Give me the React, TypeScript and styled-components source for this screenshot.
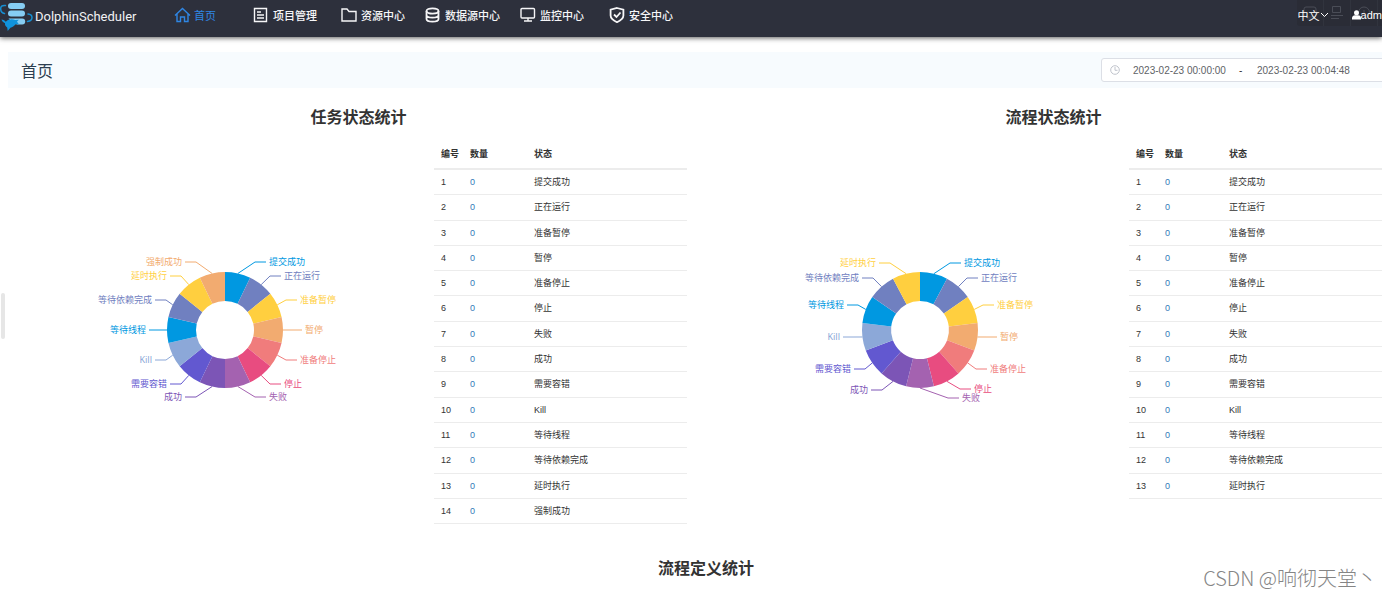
import React from "react";
import styled, { createGlobalStyle } from "styled-components";

const sans = `"Liberation Sans", "Noto Sans CJK SC", sans-serif`;

const GlobalStyle = createGlobalStyle`
  * { box-sizing: border-box; }
  body {
    margin: 0;
    background: #fff;
    color: #333;
    font-family: ${sans};
    overflow-x: hidden;
  }
  a { text-decoration: none; color: inherit; }
`;

const Page = styled.div`
  position: relative;
  overflow: hidden;
`;

const Header = styled.header`
  position: relative;
  display: flex;
  align-items: flex-start;
  height: 37px;
  background: #2d303c;
  color: #fff;
  box-shadow: 0 1px 5px rgba(0, 0, 0, 0.65);
`;

const Brand = styled.a`
  display: flex;
  align-items: center;
  gap: 2px;
  width: 174px;
  height: 32px;
  font-family: Roboto, sans-serif;
  font-size: 13px;
  color: #f2f2f4;
`;

const Nav = styled.nav`
  display: grid;
  grid-template-columns: 79px 88px 84px 95px 89px auto;
  height: 30px;
`;

const NavLink = styled.a<{ $active?: boolean }>`
  display: flex;
  align-items: center;
  gap: 3px;
  font-size: 11px;
  font-weight: ${(p) => (p.$active ? 400 : 500)};
  white-space: nowrap;
  color: ${(p) => (p.$active ? "#2f86e4" : "#f6f6f8")};

  svg {
    flex: none;
  }
`;

const Account = styled.div`
  position: relative;
  z-index: 1;
  display: flex;
  align-items: center;
  gap: 23px;
  height: 30px;
  margin-left: auto;
  font-size: 11px;
`;

const AccountLink = styled.a`
  display: flex;
  align-items: center;
  white-space: nowrap;
`;

const Ghost = styled.div`
  position: absolute;
  top: 0;
  right: 0;
  display: flex;
  width: 85px;
  height: 26px;
  overflow: hidden;
  background: #2a2c36;
  border-bottom-left-radius: 3px;
`;

const GhostCell = styled.span`
  display: flex;
  flex: none;
  align-items: center;
  justify-content: center;
  width: 27px;
  border-right: 1px solid #31343e;
`;

const Content = styled.main`
  width: calc(100% + 22px);
  padding: 15px 0 0 8px;
`;

const TitleBar = styled.div`
  display: flex;
  align-items: center;
  justify-content: space-between;
  height: 36px;
  padding: 0 13px;
  background: #f7fbfe;
`;

const PageTitle = styled.h1`
  margin: 0;
  font-size: 16px;
  font-weight: 400;
  color: #2c3e50;
`;

const RangePicker = styled.div`
  display: flex;
  align-items: center;
  width: 290px;
  height: 24px;
  padding: 0 8px;
  border: 1px solid #dcdfe6;
  border-radius: 3px;
  background: #fff;
  font-size: 10px;
`;

const DateInput = styled.input`
  width: 98px;
  height: 20px;
  padding: 0;
  border: 0;
  outline: 0;
  background: none;
  font-family: ${sans};
  font-size: 10px;
  color: #606266;
`;

const Dash = styled.span`
  width: 26px;
  padding-left: 8px;
`;

const ClockBox = styled.span`
  display: flex;
  width: 23px;
`;

const Stats = styled.div`
  display: grid;
  grid-template-columns: 1fr 1fr;
  padding: 0 3px;
`;

const SectionTitle = styled.h2`
  margin: 0;
  padding: 18px 0 0;
  font-size: 16px;
  line-height: 24px;
  font-weight: 700;
  text-align: center;
  color: #333;
`;

const PanelBody = styled.div`
  display: grid;
  grid-template-columns: 1fr 253px;
  align-items: start;
  height: 409px;
  padding: 9px 19px 0 4px;
`;

const ChartBox = styled.div`
  display: flex;
  justify-content: center;
  padding-top: 91px;
`;

const Table = styled.table`
  width: 100%;
  border-collapse: separate;
  border-spacing: 0;
  table-layout: fixed;
  font-size: 9px;
  line-height: 1.7;
  text-align: left;
`;

const Th = styled.th<{ $w?: number }>`
  width: ${(p) => (p.$w ? `${p.$w}px` : "auto")};
  height: 31px;
  padding: 2px 0 0 7px;
  border-bottom: 2px solid #ececec;
  font-weight: 700;
`;

const Td = styled.td`
  padding: 5px 0 4px 7px;
  border-bottom: 1px solid #ececec;

  a {
    color: #337ab7;
  }
`;

const Handle = styled.span`
  position: absolute;
  top: 293px;
  left: 1px;
  width: 4px;
  height: 46px;
  border-radius: 2px;
  background: #e6e6e6;
`;

const Watermark = styled.span`
  position: absolute;
  right: 5px;
  bottom: 4px;
  font-family: "Noto Sans CJK SC", sans-serif;
  font-size: 20px;
  line-height: 30px;
  font-weight: 300;
  white-space: nowrap;
  color: #858585;
`;

const Bottom = styled.section`
  padding: 0 3px;
  height: 58px;
`;

const Logo = () => (
  <svg width="33" height="31" viewBox="0 0 33 31" aria-hidden="true">
    <g fill="#86cdf3">
      <rect x="8" y="2" width="17" height="6" rx="3" />
      <rect x="8" y="9.500" width="17" height="6" rx="3" />
      <path d="M17 17.500h5.200a3 3 0 0 1 0 6h-5.700z" />
      <path d="M8.500 17.500h8.500v1.500H10z" />
    </g>
    <g fill="none" stroke="#168fd3" strokeWidth="1.500" strokeLinecap="round">
      <path d="M5.500 4.500c-3.500-.5-5 1-4.800 3.500.1 2.500 1.500 4 3.800 4.500" />
      <path d="M28 13c2.800.3 4 1.600 4 3.500 0 2.200-1.500 3.600-4.500 4" />
    </g>
    <path
      d="M1.500 18.500c2 .2 3.500 1 4.300 2.200 2.500-2.400 6.200-2.900 9.400-1.700l3.600-.2-1.900 2c1.100.9 1.700 2 1.900 3-1-.5-2.300-.6-3.400-.3-1.200 1.600-3 2.700-5 3.200l-2.700 3.200-.5-3.500c-1.700-1-2.500-2.600-2.200-4.200C3.200 21.400 2 20.200 1.500 18.500z"
      fill="#1093dc"
    />
  </svg>
);

const iconPaths: Record<string, React.ReactNode> = {
  home: (
    <path d="M1 8.500 8.500 1.500 16 8.500M3 7v7.500h3.500V10h4v4.500H14V7" />
  ),
  project: (
    <path d="M1.500 1.500h12v13h-12zM4 5h4M4 8h7M4 11h7" />
  ),
  folder: <path d="M1 2h5l2 2.500h7v9.500H1z" />,
  data: (
    <g strokeWidth="1.800">
      <ellipse cx="7.500" cy="4" rx="6" ry="2.600" />
      <path d="M1.500 4v8c0 1.600 2.700 2.700 6 2.700s6-1.100 6-2.700V4M1.500 8c0 1.600 2.700 2.700 6 2.700s6-1.100 6-2.700" />
    </g>
  ),
  monitor: (
    <path d="M2 1.500h11.500a1 1 0 0 1 1 1V10a1 1 0 0 1-1 1H2a1 1 0 0 1-1-1V2.500a1 1 0 0 1 1-1zM8 11v3M4 14h8" />
  ),
  shield: (
    <path
      strokeWidth="1.800"
      d="M8 1 14.400 2.600v6c0 3.200-3 5-6.400 6.600-3.400-1.600-6.400-3.400-6.400-6.600v-6zM5 7.500l2.500 2.500L11.500 5.500"
    />
  ),
};

const Icon = ({ name }: { name: string }) => (
  <svg
    width="17"
    height="16"
    viewBox="0 0 17 16"
    fill="none"
    stroke="currentColor"
    strokeWidth="1.400"
    aria-hidden="true"
  >
    {iconPaths[name]}
  </svg>
);

const navItems = [
  { icon: "home", label: "首页", active: true },
  { icon: "project", label: "项目管理" },
  { icon: "folder", label: "资源中心" },
  { icon: "data", label: "数据源中心" },
  { icon: "monitor", label: "监控中心" },
  { icon: "shield", label: "安全中心" },
];

/* dx / dy: where a label starts (or ends, on the left side) from the ring's centre */
type Slice = { name: string; color: string; dx: number; dy: number };

const palette = [
  "#0098e1", "#7080c0", "#ffcf3f", "#f2ab70", "#f07c7c", "#e84c80", "#a462b0",
  "#7c55b6", "#6258d0", "#8ca8d8", "#0098e1", "#7080c0", "#ffcf3f", "#f2ab70",
];

const names = [
  "提交成功", "正在运行", "准备暂停", "暂停", "准备停止", "停止", "失败",
  "成功", "需要容错", "Kill", "等待线程", "等待依赖完成", "延时执行", "强制成功",
];

const toSlices = (spots: number[][]): Slice[] =>
  spots.map(([dx, dy], i) => ({ name: names[i], color: palette[i], dx, dy }));

const taskSlices = toSlices([
  [44, -68], [59, -54], [75, -30], [80, 0], [75, 30], [59, 54], [44, 67],
  [-43, 67], [-58, 54], [-73, 30], [-79, 0], [-73, -30], [-58, -54], [-43, -68],
]);

const processSlices = toSlices([
  [44, -67], [61, -52], [77, -25], [80, 7], [70, 39], [54, 59], [42, 68],
  [-52, 60], [-69, 39], [-80, 7], [-76, -25], [-61, -52], [-44, -67],
]);

const OUTER = 58;
const INNER = 29;

const at = (r: number, angle: number) =>
  `${(r * Math.sin(angle)).toFixed(2)} ${(-r * Math.cos(angle)).toFixed(2)}`;

const Donut = ({ slices, title }: { slices: Slice[]; title: string }) => {
  const step = (2 * Math.PI) / slices.length;
  return (
    <svg
      width="280"
      height="200"
      viewBox="-140 -100 280 200"
      role="img"
      aria-label={title}
      fontFamily={`"Noto Sans", "Noto Sans CJK SC", sans-serif`}
      fontSize="9"
    >
      {slices.map((s, i) => {
        const a = i * step;
        const b = a + step;
        const side = s.dx > 0 ? 1 : -1;
        const end = s.dx - side * 3;
        return (
          <g key={s.name}>
            <path
              fill={s.color}
              d={`M${at(OUTER, a)}A${OUTER} ${OUTER} 0 0 1 ${at(OUTER, b)}L${at(INNER, b)}A${INNER} ${INNER} 0 0 0 ${at(INNER, a)}Z`}
            />
            <path
              fill="none"
              stroke={s.color}
              d={`M${at(OUTER, a + step / 2)}L${end - side * 11} ${s.dy}H${end}`}
            />
            <text
              x={s.dx}
              y={s.dy + 3}
              fill={s.color}
              textAnchor={side > 0 ? "start" : "end"}
            >
              {s.name}
            </text>
          </g>
        );
      })}
    </svg>
  );
};

const Panel = ({ title, slices }: { title: string; slices: Slice[] }) => (
  <section>
    <SectionTitle>{title}</SectionTitle>
    <PanelBody>
      <ChartBox>
        <Donut slices={slices} title={title} />
      </ChartBox>
      <Table>
        <thead>
          <tr>
            <Th $w={29}>编号</Th>
            <Th $w={64}>数量</Th>
            <Th>状态</Th>
          </tr>
        </thead>
        <tbody>
          {slices.map((s, i) => (
            <tr key={s.name}>
              <Td>{i + 1}</Td>
              <Td>
                <a href="#list">0</a>
              </Td>
              <Td>{s.name}</Td>
            </tr>
          ))}
        </tbody>
      </Table>
    </PanelBody>
  </section>
);

export default function App() {
  return (
    <Page>
      <GlobalStyle />
      <Header>
        <Ghost aria-hidden="true">
          <GhostCell>
            <svg width="14" height="14" viewBox="0 0 14 14" fill="none" stroke="#4a4d57">
              <rect x="1" y="1" width="12" height="10" rx="2" />
              <path d="M4 13h6" />
            </svg>
          </GhostCell>
          <GhostCell>
            <svg width="14" height="14" viewBox="0 0 14 14" fill="none" stroke="#4a4d57">
              <path d="M2.500 .5h8v6h-8zM1 9.500h12M1 12.500h8" />
            </svg>
          </GhostCell>
          <GhostCell>
            <svg width="14" height="14" viewBox="0 0 14 14" fill="none" stroke="#4a4d57">
              <circle cx="7" cy="6.500" r="5.500" />
              <path d="M7 4v5" />
            </svg>
          </GhostCell>
        </Ghost>
        <Brand href="#home">
          <Logo />
          DolphinScheduler
        </Brand>
        <Nav>
          {navItems.map((n) => (
            <NavLink key={n.icon} href={`#${n.icon}`} $active={n.active}>
              <Icon name={n.icon} />
              {n.label}
            </NavLink>
          ))}
        </Nav>
        <Account>
          <AccountLink href="#language">
            中文
            <svg width="9" height="8" viewBox="0 0 9 8" fill="none" stroke="#fff" aria-hidden="true">
              <path d="m1 2 3.500 3.500L8 2" />
            </svg>
          </AccountLink>
          <AccountLink href="#user">
            <svg width="9" height="10" viewBox="0 0 9 10" fill="#fff" aria-hidden="true">
              <circle cx="4.500" cy="2.700" r="2.500" />
              <path d="M0 9.500V8c0-1.600 1.500-2.500 3-2.700h3C7.500 5.500 9 6.400 9 8v1.500z" />
            </svg>
            adm
          </AccountLink>
        </Account>
      </Header>

      <Content>
        <TitleBar>
          <PageTitle>首页</PageTitle>
          <RangePicker>
            <ClockBox>
              <svg width="10" height="10" viewBox="0 0 10 10" fill="none" stroke="#c0c4cc" aria-hidden="true">
                <circle cx="5" cy="5" r="4.300" />
                <path d="M5 2v3.300h2.500" />
              </svg>
            </ClockBox>
            <DateInput aria-label="开始日期" defaultValue="2023-02-23 00:00:00" />
            <Dash>-</Dash>
            <DateInput aria-label="结束日期" defaultValue="2023-02-23 00:04:48" />
          </RangePicker>
        </TitleBar>
        <Stats>
          <Panel title="任务状态统计" slices={taskSlices} />
          <Panel title="流程状态统计" slices={processSlices} />
        </Stats>
        <Bottom>
          <SectionTitle>流程定义统计</SectionTitle>
        </Bottom>
      </Content>
      <Handle />
      <Watermark>CSDN @响彻天堂丶</Watermark>
    </Page>
  );
}
